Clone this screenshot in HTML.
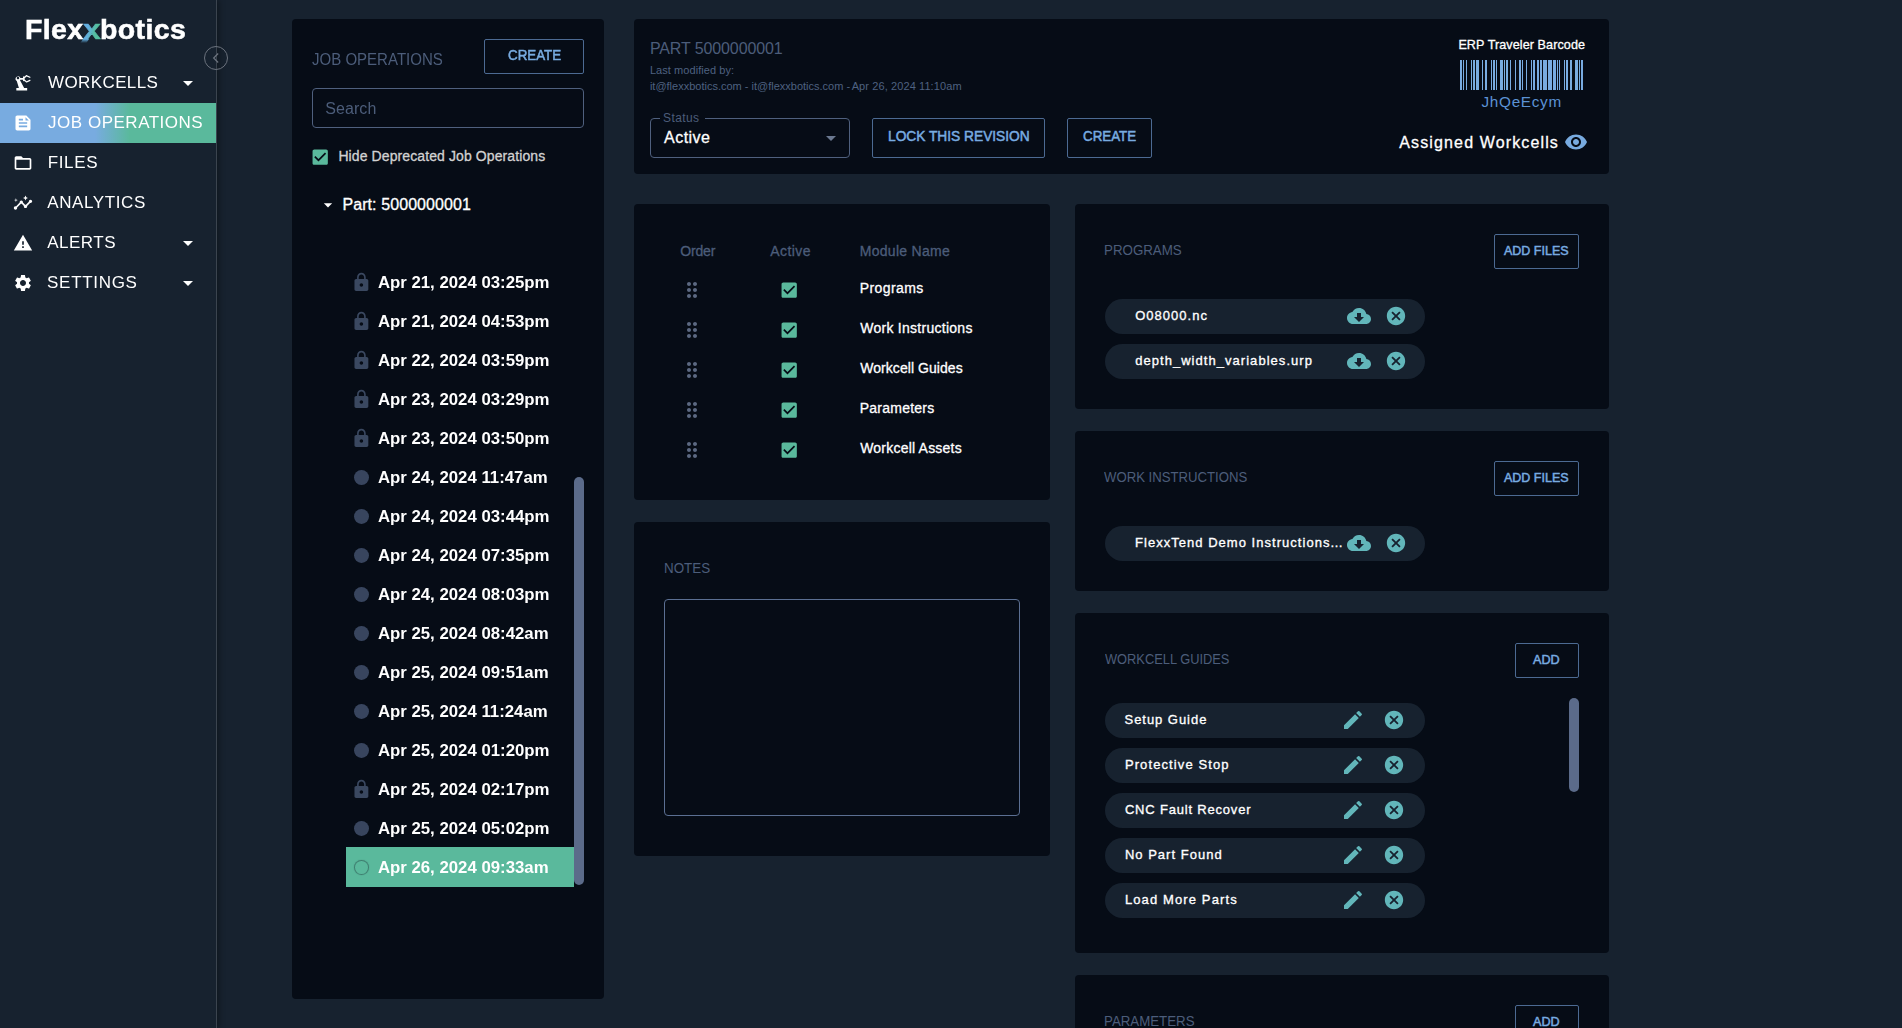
<!DOCTYPE html>
<html lang="en">
<head>
<meta charset="utf-8">
<title>Flexxbotics - Job Operations</title>
<style>
*{box-sizing:border-box;margin:0;padding:0}
html,body{width:1902px;height:1028px;overflow:hidden;background:#17222f;color:#fff;
  font-family:"Liberation Sans",sans-serif;font-size:14px}
ul{list-style:none}
#app{position:relative;width:1902px;height:1028px;overflow:hidden;background:#17222f}
.t{position:absolute;white-space:pre;display:block}
.ic{position:absolute;display:block;overflow:visible}
.m{-webkit-text-stroke:.3px currentColor}
.b{-webkit-text-stroke:.5px currentColor}
.c{-webkit-text-stroke:.33px currentColor}
h1,h2,h3{font-weight:400}

/* sidebar */
#sidebar{position:absolute;left:0;top:0;width:217px;height:1028px;background:#17222f;
  border-right:1px solid #3b444f;box-shadow:2px 0 6px rgba(0,0,0,.35);will-change:transform}
#revs{will-change:transform}
#logo .x2{display:inline-block;background:linear-gradient(100deg,#62aee0 35%,#55bfa0 65%);-webkit-background-clip:text;background-clip:text;
  -webkit-text-fill-color:transparent;color:#5cb6c0;-webkit-text-stroke:.55px transparent;transform:scale(1.12,1);position:relative}
#swoosh{position:absolute;left:83.2px;top:39px;width:6.4px;height:3.6px;transform:skewX(-33deg);transform-origin:0 0;background:linear-gradient(180deg,#62aee0,rgba(98,174,224,0))}
#collapse{position:absolute;left:204px;top:46px;width:24px;height:24px;border-radius:50%;border:1px solid #6c737e}
#nav li{position:absolute;left:0;width:216px;height:40px}
#nav li.on{background:linear-gradient(90deg,#78abe0 0%,#78abe0 44%,#5ab99c 60%,#5ab99c 100%)}

/* panels */
.panel{position:absolute;background:#060c16;border-radius:4px}
.btn{position:absolute;border:1px solid #4c6a92;border-radius:2px;height:35px;background:none;padding:0;margin:0;font:inherit;color:inherit;text-align:left;display:block;overflow:visible}
.field{position:absolute;border:1px solid #4f607e;border-radius:4px}
.chip{position:absolute;left:30px;width:320px;height:35px;border-radius:18px;background:#17222f}
.thumb{position:absolute;width:10px;border-radius:5px;background:#5b6b8a}
#revs li{position:absolute;left:54px;width:228px;height:39px}
#revs li.sel{background:#5ab99c;margin-top:-.5px;height:40px}
#revs li.sel .t,#revs li.sel .dot{margin-top:.5px}
.dot{position:absolute;left:8.4px;top:12.9px;width:14.8px;height:14.8px;border-radius:50%;background:#38455e}
#revs li.sel .dot{background:#5ab99c;box-shadow:inset 0 0 0 1px #3f7f70,0 0 1px #3f7f70}
</style>
</head>
<body>

<div id="app">
<aside id="sidebar">
<div id="logo"><span class="t" style="left:24.9px;top:11.32px;font-size:28.5px;line-height:36px;font-weight:700;letter-spacing:0.42px;-webkit-text-stroke:.55px #fff;">Flex<span class="x2">x</span>botics</span></div>
<i id="swoosh"></i>
<ul id="nav">
<li style="top:63px">
<svg class="ic" style="left:13px;top:10px" width="20" height="20" viewBox="0 0 24 24" fill="#fff" aria-hidden="true"><path d="m19.93 8.21-3.6 1.68L14 7.7V6.3l2.330-2.190 3.600 1.680c.38.18.82.01 1-.36.18-.38.01-.82-.36-1L16.650 2.600c-.38-.18-.83-.1-1.130.2l-1.740 1.600c-.18-.24-.46-.4-.78-.4-.55 0-1 .45-1 1v1H8.820C8.340 4.650 6.980 3.730 5.400 4.070c-1.160.25-2.150 1.250-2.360 2.430-.22 1.320.46 2.470 1.480 3.080L7.080 18H4v3h13v-3h-3.620L8.410 8.770c.17-.24.31-.49.41-.77H12v1c0 .55.45 1 1 1 .32 0 .6-.16.78-.4l1.740 1.600c.3.3.75.38 1.130.2l3.920-1.830c.38-.18.54-.62.36-1-.18-.37-.62-.54-1-.36zM6 7.500c-.83 0-1.500-.67-1.500-1.500S5.170 4.500 6 4.500s1.500.67 1.500 1.500S6.830 7.500 6 7.500z"/></svg>
<span class="t" style="left:48.1px;top:8.11px;font-size:17px;line-height:24px;letter-spacing:0.38px;">WORKCELLS</span>
<svg class="ic" style="left:176px;top:7.5px" width="24" height="24" viewBox="0 0 24 24" fill="#fff" aria-hidden="true"><path d="m7 10 5 5 5-5z"/></svg>
</li>
<li class="on" style="top:103px">
<svg class="ic" style="left:13px;top:10px" width="20" height="20" viewBox="0 0 24 24" fill="#fff" aria-hidden="true"><path d="M16 3H5c-1.1 0-2 .9-2 2v14c0 1.1.9 2 2 2h14c1.1 0 2-.9 2-2V8l-5-5zM7 7h5v2H7V7zm10 10H7v-2h10v2zm0-4H7v-2h10v2zm-2-4V5l4 4h-4z"/></svg>
<span class="t" style="left:48.1px;top:8.11px;font-size:17px;line-height:24px;letter-spacing:0.51px;">JOB OPERATIONS</span>
</li>
<li style="top:143px">
<svg class="ic" style="left:13px;top:10px" width="20" height="20" viewBox="0 0 24 24" fill="#fff" aria-hidden="true"><path d="M20 6h-8l-2-2H4c-1.1 0-1.99.9-1.99 2L2 18c0 1.1.9 2 2 2h16c1.1 0 2-.9 2-2V8c0-1.1-.9-2-2-2zm0 12H4V8h16v10z"/></svg>
<span class="t" style="left:47.7px;top:8.11px;font-size:17px;line-height:24px;letter-spacing:0.65px;">FILES</span>
</li>
<li style="top:183px">
<svg class="ic" style="left:13px;top:10px" width="20" height="20" viewBox="0 0 24 24" fill="#fff" aria-hidden="true"><path d="M21 8c-1.45 0-2.26 1.44-1.93 2.51l-3.55 3.56c-.3-.09-.74-.09-1.04 0l-2.55-2.55C12.27 10.45 11.46 9 10 9c-1.45 0-2.27 1.44-1.93 2.52l-4.56 4.55C2.44 15.74 1 16.55 1 18c0 1.1.9 2 2 2 1.45 0 2.26-1.44 1.93-2.51l4.55-4.56c.3.09.74.09 1.04 0l2.55 2.55C12.73 16.55 13.54 18 15 18c1.45 0 2.27-1.44 1.93-2.52l3.56-3.55c1.07.33 2.51-.48 2.51-1.93 0-1.1-.9-2-2-2zM15 9l.94-2.07L18 6l-2.06-.93L15 3l-.92 2.07L12 6l2.08.93zM3.500 11 4 9l2-.5L4 8l-.5-2L3 8l-2 .5L3 9z"/></svg>
<span class="t" style="left:47.3px;top:8.11px;font-size:17px;line-height:24px;letter-spacing:0.6px;">ANALYTICS</span>
</li>
<li style="top:223px">
<svg class="ic" style="left:13px;top:10px" width="20" height="20" viewBox="0 0 24 24" fill="#fff" aria-hidden="true"><path d="M1 21h22L12 2 1 21zm12-3h-2v-2h2v2zm0-4h-2v-4h2v4z"/></svg>
<span class="t" style="left:47.3px;top:8.11px;font-size:17px;line-height:24px;letter-spacing:0.48px;">ALERTS</span>
<svg class="ic" style="left:176px;top:7.5px" width="24" height="24" viewBox="0 0 24 24" fill="#fff" aria-hidden="true"><path d="m7 10 5 5 5-5z"/></svg>
</li>
<li style="top:263px">
<svg class="ic" style="left:13px;top:10px" width="20" height="20" viewBox="0 0 24 24" fill="#fff" aria-hidden="true"><path d="M19.14 12.94c.04-.3.06-.61.06-.94 0-.32-.02-.64-.07-.94l2.03-1.58c.18-.14.23-.41.12-.61l-1.92-3.32c-.12-.22-.37-.29-.59-.22l-2.39.96c-.5-.38-1.03-.7-1.62-.94l-.36-2.54c-.04-.24-.24-.41-.48-.41h-3.84c-.24 0-.43.17-.47.41l-.36 2.54c-.59.24-1.13.57-1.62.94l-2.39-.96c-.22-.08-.47 0-.59.22L2.74 8.87c-.12.21-.08.47.12.61l2.03 1.58c-.05.3-.09.63-.09.94s.02.64.07.94l-2.03 1.58c-.18.14-.23.41-.12.61l1.92 3.32c.12.22.37.29.59.22l2.39-.96c.5.38 1.03.7 1.62.94l.36 2.54c.05.24.24.41.48.41h3.84c.24 0 .44-.17.47-.41l.36-2.54c.59-.24 1.13-.56 1.62-.94l2.39.96c.22.08.47 0 .59-.22l1.92-3.32c.12-.22.07-.47-.12-.61l-2.01-1.58zM12 15.6c-1.98 0-3.6-1.62-3.6-3.6s1.62-3.600 3.600-3.600 3.600 1.620 3.600 3.600-1.620 3.600-3.600 3.600z"/></svg>
<span class="t" style="left:47.1px;top:8.11px;font-size:17px;line-height:24px;letter-spacing:0.69px;">SETTINGS</span>
<svg class="ic" style="left:176px;top:7.5px" width="24" height="24" viewBox="0 0 24 24" fill="#fff" aria-hidden="true"><path d="m7 10 5 5 5-5z"/></svg>
</li>
</ul>
</aside>
<div id="collapse"><svg class="ic" style="left:1px;top:1px" width="20" height="20" viewBox="0 0 24 24"><path d="M14.6 6.6 9.2 12l5.4 5.400" fill="none" stroke="#6c737e" stroke-width="1.5"/></svg></div>
<main>
<section class="panel" id="jobops" style="left:292px;top:19px;width:312px;height:980px">
<h2 class="t" style="left:20.3px;top:30.46px;font-size:16px;line-height:22px;color:#4c5d7a;transform:scaleX(0.939);transform-origin:0 50%;">JOB OPERATIONS</h2>
<button type="button" class="btn" style="left:192px;top:20px;width:100px"><span class="t b" style="left:22.7px;top:5.15px;font-size:14px;line-height:20px;color:#78abe0;transform:scaleX(0.953);transform-origin:0 50%;">CREATE</span></button>
<div class="field" style="left:20px;top:69px;width:272px;height:40px"><span class="t" style="left:12.2px;top:9.36px;font-size:16px;line-height:22px;letter-spacing:0.08px;color:#4c5d7a;">Search</span></div>
<svg class="ic" style="left:17.9px;top:127.85px" width="20.4" height="20.4" viewBox="0 0 24 24" fill="#5ab99c" aria-hidden="true"><path d="M19 3H5c-1.110 0-2 .9-2 2v14c0 1.100.89 2 2 2h14c1.110 0 2-.9 2-2V5c0-1.100-.89-2-2-2zm-9 14-5-5 1.410-1.410L10 14.170l7.590-7.590L19 8l-9 9z"/></svg>
<span class="t m" style="left:46.4px;top:127.15px;font-size:14px;line-height:20px;letter-spacing:0.1px;color:#d2d2d2;">Hide Deprecated Job Operations</span>
<svg class="ic" style="left:26px;top:176px" width="20" height="20" viewBox="0 0 24 24" fill="#fff" aria-hidden="true"><path d="m7 10 5 5 5-5z"/></svg>
<span class="t m" style="left:50.4px;top:175.36px;font-size:16px;line-height:22px;letter-spacing:0.09px;">Part: 5000000001</span>
<ul id="revs">
<li style="top:243.5px">
<svg class="ic" style="left:5.1px;top:9.6px" width="20.8" height="20.8" viewBox="0 0 24 24" fill="#3a4860" aria-hidden="true"><path d="M18 8h-1V6c0-2.760-2.240-5-5-5S7 3.240 7 6v2H6c-1.100 0-2 .9-2 2v10c0 1.100.9 2 2 2h12c1.100 0 2-.9 2-2V10c0-1.100-.9-2-2-2zm-6 9c-1.100 0-2-.9-2-2s.9-2 2-2 2 .9 2 2-.9 2-2 2zm3.100-9H8.900V6c0-1.710 1.390-3.100 3.100-3.100 1.710 0 3.100 1.390 3.100 3.100v2z"/></svg>
<span class="t" style="left:31.9px;top:8.68px;font-size:16.8px;line-height:24px;font-weight:700;">Apr 21, 2024 03:25pm</span>
</li>
<li style="top:282.5px">
<svg class="ic" style="left:5.1px;top:9.6px" width="20.8" height="20.8" viewBox="0 0 24 24" fill="#3a4860" aria-hidden="true"><path d="M18 8h-1V6c0-2.760-2.240-5-5-5S7 3.240 7 6v2H6c-1.100 0-2 .9-2 2v10c0 1.100.9 2 2 2h12c1.100 0 2-.9 2-2V10c0-1.100-.9-2-2-2zm-6 9c-1.100 0-2-.9-2-2s.9-2 2-2 2 .9 2 2-.9 2-2 2zm3.100-9H8.900V6c0-1.710 1.390-3.100 3.100-3.100 1.710 0 3.100 1.390 3.100 3.100v2z"/></svg>
<span class="t" style="left:31.9px;top:8.68px;font-size:16.8px;line-height:24px;font-weight:700;">Apr 21, 2024 04:53pm</span>
</li>
<li style="top:321.5px">
<svg class="ic" style="left:5.1px;top:9.6px" width="20.8" height="20.8" viewBox="0 0 24 24" fill="#3a4860" aria-hidden="true"><path d="M18 8h-1V6c0-2.760-2.240-5-5-5S7 3.240 7 6v2H6c-1.100 0-2 .9-2 2v10c0 1.100.9 2 2 2h12c1.100 0 2-.9 2-2V10c0-1.100-.9-2-2-2zm-6 9c-1.100 0-2-.9-2-2s.9-2 2-2 2 .9 2 2-.9 2-2 2zm3.100-9H8.900V6c0-1.710 1.390-3.100 3.100-3.100 1.710 0 3.100 1.390 3.100 3.100v2z"/></svg>
<span class="t" style="left:31.9px;top:8.68px;font-size:16.8px;line-height:24px;font-weight:700;">Apr 22, 2024 03:59pm</span>
</li>
<li style="top:360.5px">
<svg class="ic" style="left:5.1px;top:9.6px" width="20.8" height="20.8" viewBox="0 0 24 24" fill="#3a4860" aria-hidden="true"><path d="M18 8h-1V6c0-2.760-2.240-5-5-5S7 3.240 7 6v2H6c-1.100 0-2 .9-2 2v10c0 1.100.9 2 2 2h12c1.100 0 2-.9 2-2V10c0-1.100-.9-2-2-2zm-6 9c-1.100 0-2-.9-2-2s.9-2 2-2 2 .9 2 2-.9 2-2 2zm3.100-9H8.900V6c0-1.710 1.390-3.100 3.100-3.100 1.710 0 3.100 1.390 3.100 3.100v2z"/></svg>
<span class="t" style="left:31.9px;top:8.68px;font-size:16.8px;line-height:24px;font-weight:700;">Apr 23, 2024 03:29pm</span>
</li>
<li style="top:399.5px">
<svg class="ic" style="left:5.1px;top:9.6px" width="20.8" height="20.8" viewBox="0 0 24 24" fill="#3a4860" aria-hidden="true"><path d="M18 8h-1V6c0-2.760-2.240-5-5-5S7 3.240 7 6v2H6c-1.100 0-2 .9-2 2v10c0 1.100.9 2 2 2h12c1.100 0 2-.9 2-2V10c0-1.100-.9-2-2-2zm-6 9c-1.100 0-2-.9-2-2s.9-2 2-2 2 .9 2 2-.9 2-2 2zm3.100-9H8.900V6c0-1.710 1.390-3.100 3.100-3.100 1.710 0 3.100 1.390 3.100 3.100v2z"/></svg>
<span class="t" style="left:31.9px;top:8.68px;font-size:16.8px;line-height:24px;font-weight:700;">Apr 23, 2024 03:50pm</span>
</li>
<li style="top:438.5px">
<i class="dot"></i>
<span class="t" style="left:31.9px;top:8.68px;font-size:16.8px;line-height:24px;font-weight:700;">Apr 24, 2024 11:47am</span>
</li>
<li style="top:477.5px">
<i class="dot"></i>
<span class="t" style="left:31.9px;top:8.68px;font-size:16.8px;line-height:24px;font-weight:700;">Apr 24, 2024 03:44pm</span>
</li>
<li style="top:516.5px">
<i class="dot"></i>
<span class="t" style="left:31.9px;top:8.68px;font-size:16.8px;line-height:24px;font-weight:700;">Apr 24, 2024 07:35pm</span>
</li>
<li style="top:555.5px">
<i class="dot"></i>
<span class="t" style="left:31.9px;top:8.68px;font-size:16.8px;line-height:24px;font-weight:700;">Apr 24, 2024 08:03pm</span>
</li>
<li style="top:594.5px">
<i class="dot"></i>
<span class="t" style="left:31.9px;top:8.68px;font-size:16.8px;line-height:24px;font-weight:700;">Apr 25, 2024 08:42am</span>
</li>
<li style="top:633.5px">
<i class="dot"></i>
<span class="t" style="left:31.9px;top:8.68px;font-size:16.8px;line-height:24px;font-weight:700;">Apr 25, 2024 09:51am</span>
</li>
<li style="top:672.5px">
<i class="dot"></i>
<span class="t" style="left:31.9px;top:8.68px;font-size:16.8px;line-height:24px;font-weight:700;">Apr 25, 2024 11:24am</span>
</li>
<li style="top:711.5px">
<i class="dot"></i>
<span class="t" style="left:31.9px;top:8.68px;font-size:16.8px;line-height:24px;font-weight:700;">Apr 25, 2024 01:20pm</span>
</li>
<li style="top:750.5px">
<svg class="ic" style="left:5.1px;top:9.6px" width="20.8" height="20.8" viewBox="0 0 24 24" fill="#3a4860" aria-hidden="true"><path d="M18 8h-1V6c0-2.760-2.240-5-5-5S7 3.240 7 6v2H6c-1.100 0-2 .9-2 2v10c0 1.100.9 2 2 2h12c1.100 0 2-.9 2-2V10c0-1.100-.9-2-2-2zm-6 9c-1.100 0-2-.9-2-2s.9-2 2-2 2 .9 2 2-.9 2-2 2zm3.100-9H8.900V6c0-1.710 1.390-3.100 3.100-3.100 1.710 0 3.100 1.390 3.100 3.100v2z"/></svg>
<span class="t" style="left:31.9px;top:8.68px;font-size:16.8px;line-height:24px;font-weight:700;">Apr 25, 2024 02:17pm</span>
</li>
<li style="top:789.5px">
<i class="dot"></i>
<span class="t" style="left:31.9px;top:8.68px;font-size:16.8px;line-height:24px;font-weight:700;">Apr 25, 2024 05:02pm</span>
</li>
<li class="sel" style="top:828.5px">
<i class="dot"></i>
<span class="t" style="left:31.9px;top:8.68px;font-size:16.8px;line-height:24px;font-weight:700;">Apr 26, 2024 09:33am</span>
</li>
</ul>
<div class="thumb" style="left:282px;top:458px;height:408px"></div>
</section>
<section class="panel" id="hdr" style="left:634px;top:19px;width:975px;height:155px">
<h1 class="t" style="left:15.9px;top:19.26px;font-size:16px;line-height:22px;letter-spacing:-0.11px;color:#4c5d7a;font-weight:400;">PART 5000000001</h1>
<span class="t" style="left:15.9px;top:43.39px;font-size:11px;line-height:16px;letter-spacing:0.07px;color:#4e6180;">Last modified by:</span>
<span class="t" style="left:15.9px;top:59.29px;font-size:11px;line-height:16px;color:#4e6180;">it@flexxbotics.com - it@flexxbotics.com - <span style="letter-spacing:.1px;margin-left:-1.5px">Apr 26, 2024 11:10am</span></span>
<div class="field" style="left:16px;top:99px;width:200px;height:40px">
<span style="position:absolute;left:9px;top:-2px;width:45px;height:4px;background:#060c16"></span>
<span class="t" style="left:12.1px;top:-8.66px;font-size:12px;line-height:17px;letter-spacing:0.4px;color:#4c5d7a;">Status</span>
<span class="t m" style="left:13.1px;top:8.36px;font-size:16px;line-height:22px;letter-spacing:0.44px;">Active</span>
<svg class="ic" style="left:168px;top:6.8px" width="24" height="24" viewBox="0 0 24 24" fill="#6a7890" aria-hidden="true"><path d="m7 10 5 5 5-5z"/></svg>
</div>
<button type="button" class="btn" style="left:238px;top:99px;width:173px;height:40px"><span class="t b" style="left:15.1px;top:7.25px;font-size:14px;line-height:20px;color:#78abe0;transform:scaleX(0.981);transform-origin:0 50%;">LOCK THIS REVISION</span></button>
<button type="button" class="btn" style="left:433px;top:99px;width:85px;height:40px"><span class="t b" style="left:14.9px;top:7.25px;font-size:14px;line-height:20px;color:#78abe0;transform:scaleX(0.953);transform-origin:0 50%;">CREATE</span></button>
<span class="t m" style="left:824.4px;top:16.63px;font-size:12.6px;line-height:18px;letter-spacing:0.08px;">ERP Traveler Barcode</span>
<svg class="ic" style="left:826px;top:41px" width="123" height="30" viewBox="0 0 123 30" fill="#78abe0" shape-rendering="crispEdges" role="img" aria-label="barcode"><rect x="0" y="0" width="2" height="30"/><rect x="3" y="0" width="1" height="30"/><rect x="6" y="0" width="1" height="30"/><rect x="11" y="0" width="1" height="30"/><rect x="13" y="0" width="2" height="30"/><rect x="16" y="0" width="3" height="30"/><rect x="22" y="0" width="1" height="30"/><rect x="25" y="0" width="2" height="30"/><rect x="31" y="0" width="1" height="30"/><rect x="33" y="0" width="2" height="30"/><rect x="36" y="0" width="1" height="30"/><rect x="40" y="0" width="3" height="30"/><rect x="44" y="0" width="1" height="30"/><rect x="46" y="0" width="2" height="30"/><rect x="50" y="0" width="1" height="30"/><rect x="55" y="0" width="1" height="30"/><rect x="59" y="0" width="2" height="30"/><rect x="62" y="0" width="1" height="30"/><rect x="66" y="0" width="1" height="30"/><rect x="71" y="0" width="1" height="30"/><rect x="73" y="0" width="2" height="30"/><rect x="77" y="0" width="2" height="30"/><rect x="80" y="0" width="2" height="30"/><rect x="83" y="0" width="4" height="30"/><rect x="88" y="0" width="4" height="30"/><rect x="93" y="0" width="3" height="30"/><rect x="97" y="0" width="1" height="30"/><rect x="99" y="0" width="1" height="30"/><rect x="104" y="0" width="1" height="30"/><rect x="106" y="0" width="2" height="30"/><rect x="110" y="0" width="2" height="30"/><rect x="115" y="0" width="3" height="30"/><rect x="119" y="0" width="1" height="30"/><rect x="121" y="0" width="2" height="30"/></svg>
<span class="t" style="left:847.5px;top:71.9px;font-size:15.3px;line-height:21px;letter-spacing:0.7px;color:#5c92d4;">JhQeEcym</span>
<span class="t m" style="left:765.3px;top:113.46px;font-size:16px;line-height:22px;letter-spacing:1.13px;">Assigned Workcells</span>
<svg class="ic" style="left:930px;top:111px" width="24" height="24" viewBox="0 0 24 24" fill="#78abe0" aria-hidden="true"><path d="M12 4.500C7 4.500 2.730 7.610 1 12c1.730 4.390 6 7.500 11 7.500s9.270-3.110 11-7.500c-1.730-4.390-6-7.500-11-7.500zM12 17c-2.760 0-5-2.240-5-5s2.240-5 5-5 5 2.240 5 5-2.240 5-5 5zm0-8c-1.660 0-3 1.340-3 3s1.340 3 3 3 3-1.340 3-3-1.340-3-3-3z"/></svg>
</section>
<section class="panel" id="mods" style="left:634px;top:204px;width:416px;height:296px">
<span class="t m" style="left:46.2px;top:37.45px;font-size:14px;line-height:20px;letter-spacing:-0.15px;color:#4c5d7a;">Order</span>
<span class="t m" style="left:136.3px;top:37.45px;font-size:14px;line-height:20px;letter-spacing:0.4px;color:#4c5d7a;">Active</span>
<span class="t m" style="left:225.8px;top:37.45px;font-size:14px;line-height:20px;letter-spacing:0.28px;color:#4c5d7a;">Module Name</span>
<svg class="ic" style="left:46px;top:74px" width="24" height="24" viewBox="0 0 24 24" fill="#5c6982" aria-hidden="true"><path d="M11 18c0 1.100-.9 2-2 2s-2-.9-2-2 .9-2 2-2 2 .9 2 2zm-2-8c-1.100 0-2 .9-2 2s.9 2 2 2 2-.9 2-2-.9-2-2-2zm0-6c-1.100 0-2 .9-2 2s.9 2 2 2 2-.9 2-2-.9-2-2-2zm6 4c1.100 0 2-.9 2-2s-.9-2-2-2-2 .9-2 2 .9 2 2 2zm0 2c-1.100 0-2 .9-2 2s.9 2 2 2 2-.9 2-2-.9-2-2-2zm0 6c-1.100 0-2 .9-2 2s.9 2 2 2 2-.9 2-2-.9-2-2-2z"/></svg>
<svg class="ic" style="left:144.9px;top:75.8px" width="20.4" height="20.4" viewBox="0 0 24 24" fill="#5ab99c" aria-hidden="true"><path d="M19 3H5c-1.110 0-2 .9-2 2v14c0 1.100.89 2 2 2h14c1.110 0 2-.9 2-2V5c0-1.100-.89-2-2-2zm-9 14-5-5 1.410-1.410L10 14.170l7.590-7.590L19 8l-9 9z"/></svg>
<span class="t m" style="left:225.8px;top:74.05px;font-size:14px;line-height:20px;letter-spacing:0.4px;">Programs</span>
<svg class="ic" style="left:46px;top:114px" width="24" height="24" viewBox="0 0 24 24" fill="#5c6982" aria-hidden="true"><path d="M11 18c0 1.100-.9 2-2 2s-2-.9-2-2 .9-2 2-2 2 .9 2 2zm-2-8c-1.100 0-2 .9-2 2s.9 2 2 2 2-.9 2-2-.9-2-2-2zm0-6c-1.100 0-2 .9-2 2s.9 2 2 2 2-.9 2-2-.9-2-2-2zm6 4c1.100 0 2-.9 2-2s-.9-2-2-2-2 .9-2 2 .9 2 2 2zm0 2c-1.100 0-2 .9-2 2s.9 2 2 2 2-.9 2-2-.9-2-2-2zm0 6c-1.100 0-2 .9-2 2s.9 2 2 2 2-.9 2-2-.9-2-2-2z"/></svg>
<svg class="ic" style="left:144.9px;top:115.8px" width="20.4" height="20.4" viewBox="0 0 24 24" fill="#5ab99c" aria-hidden="true"><path d="M19 3H5c-1.110 0-2 .9-2 2v14c0 1.100.89 2 2 2h14c1.110 0 2-.9 2-2V5c0-1.100-.89-2-2-2zm-9 14-5-5 1.410-1.410L10 14.170l7.590-7.590L19 8l-9 9z"/></svg>
<span class="t m" style="left:226.2px;top:114.05px;font-size:14px;line-height:20px;letter-spacing:0.27px;">Work Instructions</span>
<svg class="ic" style="left:46px;top:154px" width="24" height="24" viewBox="0 0 24 24" fill="#5c6982" aria-hidden="true"><path d="M11 18c0 1.100-.9 2-2 2s-2-.9-2-2 .9-2 2-2 2 .9 2 2zm-2-8c-1.100 0-2 .9-2 2s.9 2 2 2 2-.9 2-2-.9-2-2-2zm0-6c-1.100 0-2 .9-2 2s.9 2 2 2 2-.9 2-2-.9-2-2-2zm6 4c1.100 0 2-.9 2-2s-.9-2-2-2-2 .9-2 2 .9 2 2 2zm0 2c-1.100 0-2 .9-2 2s.9 2 2 2 2-.9 2-2-.9-2-2-2zm0 6c-1.100 0-2 .9-2 2s.9 2 2 2 2-.9 2-2-.9-2-2-2z"/></svg>
<svg class="ic" style="left:144.9px;top:155.8px" width="20.4" height="20.4" viewBox="0 0 24 24" fill="#5ab99c" aria-hidden="true"><path d="M19 3H5c-1.110 0-2 .9-2 2v14c0 1.100.89 2 2 2h14c1.110 0 2-.9 2-2V5c0-1.100-.89-2-2-2zm-9 14-5-5 1.410-1.410L10 14.170l7.590-7.590L19 8l-9 9z"/></svg>
<span class="t m" style="left:226.2px;top:154.05px;font-size:14px;line-height:20px;letter-spacing:0.06px;">Workcell Guides</span>
<svg class="ic" style="left:46px;top:194px" width="24" height="24" viewBox="0 0 24 24" fill="#5c6982" aria-hidden="true"><path d="M11 18c0 1.100-.9 2-2 2s-2-.9-2-2 .9-2 2-2 2 .9 2 2zm-2-8c-1.100 0-2 .9-2 2s.9 2 2 2 2-.9 2-2-.9-2-2-2zm0-6c-1.100 0-2 .9-2 2s.9 2 2 2 2-.9 2-2-.9-2-2-2zm6 4c1.100 0 2-.9 2-2s-.9-2-2-2-2 .9-2 2 .9 2 2 2zm0 2c-1.100 0-2 .9-2 2s.9 2 2 2 2-.9 2-2-.9-2-2-2zm0 6c-1.100 0-2 .9-2 2s.9 2 2 2 2-.9 2-2-.9-2-2-2z"/></svg>
<svg class="ic" style="left:144.9px;top:195.8px" width="20.4" height="20.4" viewBox="0 0 24 24" fill="#5ab99c" aria-hidden="true"><path d="M19 3H5c-1.110 0-2 .9-2 2v14c0 1.100.89 2 2 2h14c1.110 0 2-.9 2-2V5c0-1.100-.89-2-2-2zm-9 14-5-5 1.410-1.410L10 14.170l7.590-7.590L19 8l-9 9z"/></svg>
<span class="t m" style="left:225.8px;top:194.05px;font-size:14px;line-height:20px;letter-spacing:0.22px;">Parameters</span>
<svg class="ic" style="left:46px;top:234px" width="24" height="24" viewBox="0 0 24 24" fill="#5c6982" aria-hidden="true"><path d="M11 18c0 1.100-.9 2-2 2s-2-.9-2-2 .9-2 2-2 2 .9 2 2zm-2-8c-1.100 0-2 .9-2 2s.9 2 2 2 2-.9 2-2-.9-2-2-2zm0-6c-1.100 0-2 .9-2 2s.9 2 2 2 2-.9 2-2-.9-2-2-2zm6 4c1.100 0 2-.9 2-2s-.9-2-2-2-2 .9-2 2 .9 2 2 2zm0 2c-1.100 0-2 .9-2 2s.9 2 2 2 2-.9 2-2-.9-2-2-2zm0 6c-1.100 0-2 .9-2 2s.9 2 2 2 2-.9 2-2-.9-2-2-2z"/></svg>
<svg class="ic" style="left:144.9px;top:235.8px" width="20.4" height="20.4" viewBox="0 0 24 24" fill="#5ab99c" aria-hidden="true"><path d="M19 3H5c-1.110 0-2 .9-2 2v14c0 1.100.89 2 2 2h14c1.110 0 2-.9 2-2V5c0-1.100-.89-2-2-2zm-9 14-5-5 1.410-1.410L10 14.170l7.590-7.590L19 8l-9 9z"/></svg>
<span class="t m" style="left:226.2px;top:234.05px;font-size:14px;line-height:20px;letter-spacing:0.21px;">Workcell Assets</span>
</section>
<section class="panel" id="notes" style="left:634px;top:522px;width:416px;height:334px">
<h3 class="t" style="left:30px;top:36.25px;font-size:14px;line-height:20px;color:#4c5d7a;transform:scaleX(0.957);transform-origin:0 50%;">NOTES</h3>
<div class="field" style="left:30px;top:77px;width:356px;height:217px;border-color:#5b6f92"></div>
</section>
<section class="panel" id="progs" style="left:1075px;top:204px;width:534px;height:205px">
<h3 class="t" style="left:29px;top:36.15px;font-size:14px;line-height:20px;color:#4c5d7a;transform:scaleX(0.952);transform-origin:0 50%;">PROGRAMS</h3>
<button type="button" class="btn" style="left:419px;top:30px;width:85px"><span class="t b" style="left:9.1px;top:6.5px;font-size:13px;line-height:18px;color:#78abe0;transform:scaleX(0.961);transform-origin:0 50%;">ADD FILES</span></button>
<ul>
<li class="chip" style="top:95px">
<span class="t c" style="left:30.2px;top:7.8px;font-size:13px;line-height:18px;letter-spacing:1.02px;">O08000.nc</span>
<svg class="ic" style="left:242px;top:5px" width="24" height="24" viewBox="0 0 24 24" fill="#62b6ba" aria-hidden="true"><path d="M19.350 10.040C18.670 6.590 15.640 4 12 4 9.110 4 6.600 5.640 5.350 8.040 2.340 8.360 0 10.910 0 14c0 3.310 2.690 6 6 6h13c2.760 0 5-2.240 5-5 0-2.640-2.050-4.780-4.650-4.960zM17 13l-5 5-5-5h3V9h4v4h3z"/></svg>
<svg class="ic" style="left:280px;top:6px" width="22" height="22" viewBox="0 0 24 24" fill="#62b6ba" aria-hidden="true"><path d="M12 2C6.470 2 2 6.470 2 12s4.470 10 10 10 10-4.470 10-10S17.530 2 12 2zm5 13.590L15.590 17 12 13.410 8.410 17 7 15.590 10.590 12 7 8.410 8.410 7 12 10.590 15.590 7 17 8.410 13.410 12 17 15.590z"/></svg>
</li>
<li class="chip" style="top:140px">
<span class="t c" style="left:30.2px;top:7.8px;font-size:13px;line-height:18px;letter-spacing:1.04px;">depth_width_variables.urp</span>
<svg class="ic" style="left:242px;top:5px" width="24" height="24" viewBox="0 0 24 24" fill="#62b6ba" aria-hidden="true"><path d="M19.350 10.040C18.670 6.590 15.640 4 12 4 9.110 4 6.600 5.640 5.350 8.040 2.340 8.360 0 10.910 0 14c0 3.310 2.690 6 6 6h13c2.760 0 5-2.240 5-5 0-2.640-2.050-4.780-4.650-4.960zM17 13l-5 5-5-5h3V9h4v4h3z"/></svg>
<svg class="ic" style="left:280px;top:6px" width="22" height="22" viewBox="0 0 24 24" fill="#62b6ba" aria-hidden="true"><path d="M12 2C6.470 2 2 6.470 2 12s4.470 10 10 10 10-4.470 10-10S17.530 2 12 2zm5 13.590L15.590 17 12 13.410 8.410 17 7 15.590 10.590 12 7 8.410 8.410 7 12 10.590 15.590 7 17 8.410 13.410 12 17 15.590z"/></svg>
</li>
</ul>
</section>
<section class="panel" id="winst" style="left:1075px;top:431px;width:534px;height:160px">
<h3 class="t" style="left:29.3px;top:36.15px;font-size:14px;line-height:20px;color:#4c5d7a;transform:scaleX(0.94);transform-origin:0 50%;">WORK INSTRUCTIONS</h3>
<button type="button" class="btn" style="left:419px;top:30px;width:85px"><span class="t b" style="left:9.1px;top:6.5px;font-size:13px;line-height:18px;color:#78abe0;transform:scaleX(0.961);transform-origin:0 50%;">ADD FILES</span></button>
<ul>
<li class="chip" style="top:95px">
<span class="t c" style="left:30px;top:7.8px;font-size:13px;line-height:18px;letter-spacing:1.03px;">FlexxTend Demo Instructions<span style="letter-spacing:0;margin-left:-.5px">…</span></span>
<svg class="ic" style="left:242px;top:5px" width="24" height="24" viewBox="0 0 24 24" fill="#62b6ba" aria-hidden="true"><path d="M19.350 10.040C18.670 6.590 15.640 4 12 4 9.110 4 6.600 5.640 5.350 8.040 2.340 8.360 0 10.910 0 14c0 3.310 2.690 6 6 6h13c2.760 0 5-2.240 5-5 0-2.640-2.050-4.780-4.650-4.960zM17 13l-5 5-5-5h3V9h4v4h3z"/></svg>
<svg class="ic" style="left:280px;top:6px" width="22" height="22" viewBox="0 0 24 24" fill="#62b6ba" aria-hidden="true"><path d="M12 2C6.470 2 2 6.470 2 12s4.470 10 10 10 10-4.470 10-10S17.530 2 12 2zm5 13.590L15.590 17 12 13.410 8.410 17 7 15.590 10.590 12 7 8.410 8.410 7 12 10.590 15.590 7 17 8.410 13.410 12 17 15.590z"/></svg>
</li>
</ul>
</section>
<section class="panel" id="guides" style="left:1075px;top:613px;width:534px;height:340px">
<h3 class="t" style="left:30px;top:36.15px;font-size:14px;line-height:20px;color:#4c5d7a;transform:scaleX(0.917);transform-origin:0 50%;">WORKCELL GUIDES</h3>
<button type="button" class="btn" style="left:440px;top:30px;width:64px"><span class="t b" style="left:17.3px;top:6.5px;font-size:13px;line-height:18px;color:#78abe0;transform:scaleX(0.97);transform-origin:0 50%;">ADD</span></button>
<ul>
<li class="chip" style="top:90px">
<span class="t c" style="left:19.5px;top:8.1px;font-size:13px;line-height:18px;letter-spacing:0.96px;">Setup Guide</span>
<svg class="ic" style="left:236px;top:5px" width="24" height="24" viewBox="0 0 24 24" fill="#62b6ba" aria-hidden="true"><path d="M3 17.250V21h3.750L17.810 9.940l-3.750-3.750L3 17.250zM20.710 7.040c.39-.39.39-1.020 0-1.410l-2.340-2.340a.9959.9959 0 0 0-1.410 0l-1.830 1.830 3.750 3.750 1.830-1.830z"/></svg>
<svg class="ic" style="left:278px;top:6px" width="22" height="22" viewBox="0 0 24 24" fill="#62b6ba" aria-hidden="true"><path d="M12 2C6.470 2 2 6.470 2 12s4.470 10 10 10 10-4.470 10-10S17.530 2 12 2zm5 13.590L15.590 17 12 13.410 8.410 17 7 15.590 10.590 12 7 8.410 8.410 7 12 10.590 15.590 7 17 8.410 13.410 12 17 15.590z"/></svg>
</li>
<li class="chip" style="top:135px">
<span class="t c" style="left:19.9px;top:8.1px;font-size:13px;line-height:18px;letter-spacing:1.11px;">Protective Stop</span>
<svg class="ic" style="left:236px;top:5px" width="24" height="24" viewBox="0 0 24 24" fill="#62b6ba" aria-hidden="true"><path d="M3 17.250V21h3.750L17.810 9.940l-3.750-3.750L3 17.250zM20.710 7.040c.39-.39.39-1.020 0-1.410l-2.340-2.340a.9959.9959 0 0 0-1.410 0l-1.830 1.830 3.750 3.750 1.830-1.830z"/></svg>
<svg class="ic" style="left:278px;top:6px" width="22" height="22" viewBox="0 0 24 24" fill="#62b6ba" aria-hidden="true"><path d="M12 2C6.470 2 2 6.470 2 12s4.470 10 10 10 10-4.470 10-10S17.530 2 12 2zm5 13.590L15.590 17 12 13.410 8.410 17 7 15.590 10.590 12 7 8.410 8.410 7 12 10.590 15.590 7 17 8.410 13.410 12 17 15.590z"/></svg>
</li>
<li class="chip" style="top:180px">
<span class="t c" style="left:19.9px;top:8.1px;font-size:13px;line-height:18px;letter-spacing:0.81px;">CNC Fault Recover</span>
<svg class="ic" style="left:236px;top:5px" width="24" height="24" viewBox="0 0 24 24" fill="#62b6ba" aria-hidden="true"><path d="M3 17.250V21h3.750L17.810 9.940l-3.750-3.750L3 17.250zM20.710 7.040c.39-.39.39-1.020 0-1.410l-2.340-2.340a.9959.9959 0 0 0-1.410 0l-1.830 1.830 3.750 3.750 1.830-1.830z"/></svg>
<svg class="ic" style="left:278px;top:6px" width="22" height="22" viewBox="0 0 24 24" fill="#62b6ba" aria-hidden="true"><path d="M12 2C6.470 2 2 6.470 2 12s4.470 10 10 10 10-4.470 10-10S17.530 2 12 2zm5 13.590L15.590 17 12 13.410 8.410 17 7 15.590 10.590 12 7 8.410 8.410 7 12 10.590 15.590 7 17 8.410 13.410 12 17 15.590z"/></svg>
</li>
<li class="chip" style="top:225px">
<span class="t c" style="left:19.9px;top:8.1px;font-size:13px;line-height:18px;letter-spacing:1.02px;">No Part Found</span>
<svg class="ic" style="left:236px;top:5px" width="24" height="24" viewBox="0 0 24 24" fill="#62b6ba" aria-hidden="true"><path d="M3 17.250V21h3.750L17.810 9.940l-3.750-3.750L3 17.250zM20.710 7.040c.39-.39.39-1.020 0-1.410l-2.340-2.340a.9959.9959 0 0 0-1.410 0l-1.830 1.830 3.750 3.750 1.830-1.830z"/></svg>
<svg class="ic" style="left:278px;top:6px" width="22" height="22" viewBox="0 0 24 24" fill="#62b6ba" aria-hidden="true"><path d="M12 2C6.470 2 2 6.470 2 12s4.470 10 10 10 10-4.470 10-10S17.530 2 12 2zm5 13.590L15.590 17 12 13.410 8.410 17 7 15.590 10.590 12 7 8.410 8.410 7 12 10.590 15.590 7 17 8.410 13.410 12 17 15.590z"/></svg>
</li>
<li class="chip" style="top:270px">
<span class="t c" style="left:19.9px;top:8.1px;font-size:13px;line-height:18px;letter-spacing:1.12px;">Load More Parts</span>
<svg class="ic" style="left:236px;top:5px" width="24" height="24" viewBox="0 0 24 24" fill="#62b6ba" aria-hidden="true"><path d="M3 17.250V21h3.750L17.810 9.940l-3.750-3.750L3 17.250zM20.710 7.040c.39-.39.39-1.020 0-1.410l-2.340-2.340a.9959.9959 0 0 0-1.410 0l-1.830 1.830 3.750 3.750 1.830-1.830z"/></svg>
<svg class="ic" style="left:278px;top:6px" width="22" height="22" viewBox="0 0 24 24" fill="#62b6ba" aria-hidden="true"><path d="M12 2C6.470 2 2 6.470 2 12s4.470 10 10 10 10-4.470 10-10S17.530 2 12 2zm5 13.590L15.590 17 12 13.410 8.410 17 7 15.590 10.590 12 7 8.410 8.410 7 12 10.590 15.590 7 17 8.410 13.410 12 17 15.590z"/></svg>
</li>
</ul>
<div class="thumb" style="left:494px;top:85px;height:94px"></div>
</section>
<section class="panel" id="params" style="left:1075px;top:975px;width:534px;height:120px">
<h3 class="t" style="left:29px;top:36.15px;font-size:14px;line-height:20px;color:#4c5d7a;transform:scaleX(0.949);transform-origin:0 50%;">PARAMETERS</h3>
<button type="button" class="btn" style="left:440px;top:30px;width:64px"><span class="t b" style="left:17.3px;top:6.5px;font-size:13px;line-height:18px;color:#78abe0;transform:scaleX(0.97);transform-origin:0 50%;">ADD</span></button>
</section>
</main>
</div>
</body>
</html>
